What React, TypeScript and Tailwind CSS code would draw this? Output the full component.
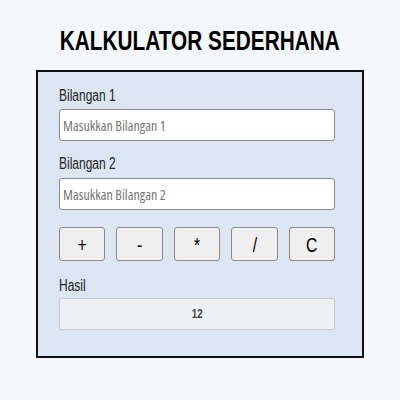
import React, { useState } from "react";

const ops = ["+", "-", "*", "/", "C"];

const App = () => {
  const [a, setA] = useState("");
  const [b, setB] = useState("");
  const [hasil, setHasil] = useState("12");

  const hitung = (op: string) => {
    if (op === "C") {
      setA("");
      setB("");
      setHasil("");
      return;
    }
    const x = parseFloat(a);
    const y = parseFloat(b);
    if (isNaN(x) || isNaN(y)) return;
    if (op === "+") setHasil(String(x + y));
    if (op === "-") setHasil(String(x - y));
    if (op === "*") setHasil(String(x * y));
    if (op === "/") setHasil(String(x / y));
  };

  return (
    <div className="w-[400px] h-[400px] bg-[#f5f8fb] flex flex-col items-center font-['Liberation_Sans',Arial,sans-serif]">
      <h1 className="mt-[26px] h-[30px] text-[27px] leading-[30px] font-bold text-black">
        <span className="inline-block scale-x-[0.77]">KALKULATOR SEDERHANA</span>
      </h1>

      <div className="mt-[14px] w-[328px] h-[288px] border-2 border-[#111] bg-[#dce6f3] pl-[21px] pt-[14px]">
        <label className="block h-[20px] text-[16px] leading-[20px] text-[#222]">
          <span className="inline-block origin-left scale-x-75">Bilangan 1</span>
        </label>
        <input
          value={a}
          onChange={(e) => setA(e.target.value)}
          placeholder="Masukkan Bilangan 1"
          className="mt-[3px] block w-[276px] h-[32px] bg-white border border-[#8a8a8a] rounded-[3px] px-[3px] font-['Open_Sans',sans-serif] [font-stretch:75%] text-[14px] text-[#333] placeholder:text-[#757575] outline-none"
        />

        <label className="block mt-[13px] h-[20px] text-[16px] leading-[20px] text-[#222]">
          <span className="inline-block origin-left scale-x-75">Bilangan 2</span>
        </label>
        <input
          value={b}
          onChange={(e) => setB(e.target.value)}
          placeholder="Masukkan Bilangan 2"
          className="mt-[4px] block w-[276px] h-[32px] bg-white border border-[#8a8a8a] rounded-[3px] px-[3px] font-['Open_Sans',sans-serif] [font-stretch:75%] text-[14px] text-[#333] placeholder:text-[#757575] outline-none"
        />

        <div className="mt-[17px] flex gap-[11px] w-[276px]">
          {ops.map((op) => (
            <button
              key={op}
              onClick={() => hitung(op)}
              className="flex-1 h-[34px] bg-[#efefef] border border-[#8a8a8a] rounded-[3px] text-[21px] leading-none text-black"
            >
              <span className="inline-block scale-x-75">{op}</span>
            </button>
          ))}
        </div>

        <div className="mt-[15px] h-[20px] text-[16px] leading-[20px] text-[#222]">
          <span className="inline-block origin-left scale-x-75">Hasil</span>
        </div>
        <div className="mt-[2px] w-[276px] h-[32px] bg-[#eef0f4] border border-[#c8ccd2] rounded-[2px] flex items-center justify-center text-[13px] font-bold text-[#444]">
          <span className="inline-block scale-x-75">{hasil}</span>
        </div>
      </div>
    </div>
  );
};

export default App;
